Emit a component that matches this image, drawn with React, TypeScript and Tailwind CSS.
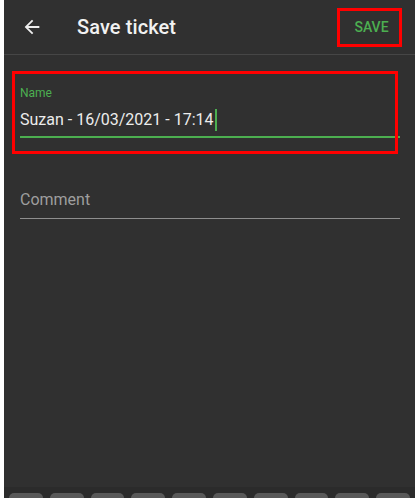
export default function App() {
  const keys = Array.from({ length: 10 }, (_, i) => i);

  return (
    <div className="flex h-[498px] w-[415px] bg-white font-['Roboto','Liberation_Sans',sans-serif]">
      {/* thin white edge from the original capture */}
      <div className="w-1 shrink-0" />

      <div className="relative flex flex-1 flex-col bg-[#303030]">
        {/* App bar */}
        <header className="flex h-[55px] shrink-0 items-center border-b border-[#464646] pl-[17px] pr-[13px]">
          <button type="button" className="flex items-center text-[#eeeeee]">
            <svg width="22" height="22" viewBox="0 0 24 24" fill="currentColor">
              <path d="M20 11H7.83l5.59-5.59L12 4l-8 8 8 8 1.41-1.41L7.83 13H20v-2z" />
            </svg>
          </button>
          <h1 className="ml-[34px] text-[20px] font-medium tracking-[0.1px] text-[#f2f2f2]">Save ticket</h1>
          <div className="ml-auto flex h-[39px] w-[65px] items-center justify-center border-[3px] border-[#ff0000] pl-[4px] pt-px">
            <span className="text-[14px] font-medium text-[#4caf50]">SAVE</span>
          </div>
        </header>

        {/* Form */}
        <div className="relative flex flex-col pl-4 pr-[15px] pt-[30px]">
          {/* Name field */}
          <div className="flex flex-col">
            <label className="text-[12px] leading-4 text-[#4caf50]">Name</label>
            <div className="mt-[7px] flex items-center text-[16px] leading-6 text-[#ececec]">
              <span>Suzan - 16/03/2021 - 17:14</span>
              <span className="ml-px h-[22px] w-[2px] bg-[#4caf50]" />
            </div>
            <div className="mt-1 h-[2px] bg-[#4caf50]" />
          </div>

          {/* Annotation box around name field */}
          <div className="pointer-events-none absolute left-2 top-[16px] h-[83px] w-[386px] border-[3px] border-[#ff0000]" />

          {/* Comment field */}
          <div className="mt-[50px] flex flex-col">
            <span className="text-[16px] leading-6 text-[#9e9e9e]">Comment</span>
            <div className="mt-[6px] h-px bg-[#8e8e8e]" />
          </div>
        </div>

        <div className="flex-1" />

        {/* Keyboard top edge */}
        <div className="flex h-[11px] shrink-0 items-end bg-[#2b2b2b] px-[5px]">
          <div className="grid w-full grid-cols-10 gap-[7px]">
            {keys.map((k) => (
              <div key={k} className="h-[5px] rounded-t-[5px] bg-[#595959]" />
            ))}
          </div>
        </div>
      </div>
    </div>
  );
}
